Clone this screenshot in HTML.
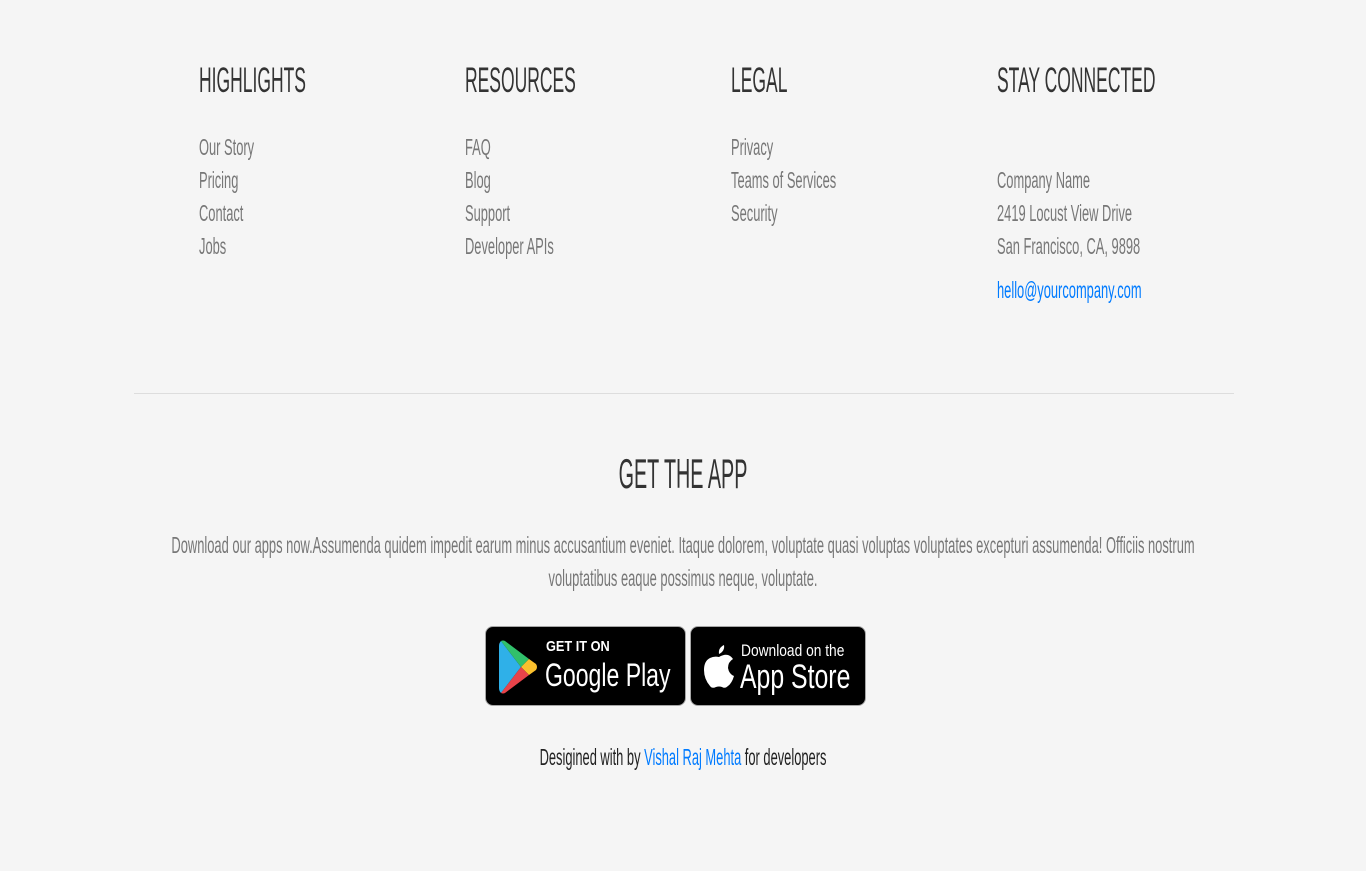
<!DOCTYPE html>
<html><head><meta charset="utf-8"><style>
body{margin:0;width:1366px;height:871px;background:#f5f5f5;position:relative;overflow:hidden;font-family:"Liberation Sans",sans-serif}
.t{position:absolute;white-space:nowrap;line-height:1;transform:scaleX(.56);transform-origin:0 0;font-size:23px;color:#777}
.h{font-size:35px;color:#333;transform:scaleX(.5)}
.c{left:-500px;width:2366px;text-align:center;transform-origin:50% 0}
a{color:#007bff;text-decoration:none}
.badge{position:absolute;background:#000;border:1.5px solid #a6a6a6;border-radius:8px;box-sizing:border-box;color:#fff;overflow:hidden}
.bt{position:absolute;white-space:nowrap;line-height:1;transform-origin:0 0}
</style></head><body>
<div class="t h" style="left:199px;top:63px">HIGHLIGHTS</div>
<div class="t h" style="left:465px;top:63px">RESOURCES</div>
<div class="t h" style="left:731px;top:63px">LEGAL</div>
<div class="t h" style="left:997px;top:63px">STAY CONNECTED</div>

<div class="t" style="left:199px;top:136px">Our Story</div>
<div class="t" style="left:199px;top:169px">Pricing</div>
<div class="t" style="left:199px;top:202px">Contact</div>
<div class="t" style="left:199px;top:235px">Jobs</div>

<div class="t" style="left:465px;top:136px">FAQ</div>
<div class="t" style="left:465px;top:169px">Blog</div>
<div class="t" style="left:465px;top:202px">Support</div>
<div class="t" style="left:465px;top:235px">Developer APIs</div>

<div class="t" style="left:731px;top:136px">Privacy</div>
<div class="t" style="left:731px;top:169px">Teams of Services</div>
<div class="t" style="left:731px;top:202px">Security</div>

<div class="t" style="left:997px;top:169px">Company Name</div>
<div class="t" style="left:997px;top:202px">2419 Locust View Drive</div>
<div class="t" style="left:997px;top:235px">San Francisco, CA, 9898</div>
<div class="t" style="left:997px;top:279px;color:#007bff">hello@yourcompany.com</div>

<div style="position:absolute;left:134px;top:393px;width:1100px;height:1px;background:#ddd"></div>

<div class="t h c" style="top:453px;font-size:42px;transform:scaleX(.47)">GET THE APP</div>
<div class="t c" style="top:534px;transform:scaleX(.561)">Download our apps now.Assumenda quidem impedit earum minus accusantium eveniet. Itaque dolorem, voluptate quasi voluptas voluptates excepturi assumenda! Officiis nostrum</div>
<div class="t c" style="top:567px;transform:scaleX(.561)">voluptatibus eaque possimus neque, voluptate.</div>

<div class="badge" style="left:485px;top:626px;width:201px;height:80px">
<svg style="position:absolute;left:13px;top:12px" width="38" height="56" viewBox="0 0 38 56">
<path d="M2 2 L22 28 L2 54 Q0 52 0 49 L0 7 Q0 4 2 2Z" fill="#2fb0e8"/>
<path d="M2 2 L22 28 L30 20 L6 2 Q4 1 2 2Z" fill="#31c06b"/>
<path d="M22 28 L30 20 L37 25 Q39 28 37 31 L30 36Z" fill="#fbc02d"/>
<path d="M2 54 L22 28 L30 36 L6 54 Q4 55 2 54Z" fill="#e8434a"/>
</svg>
<div class="bt" style="left:60px;top:12px;font-size:15px;font-weight:bold;transform:scaleX(.85)">GET IT ON</div>
<div class="bt" style="left:59px;top:32px;font-size:32px;transform:scaleX(.72)">Google Play</div>
</div>
<div class="badge" style="left:690px;top:626px;width:176px;height:80px">
<svg style="position:absolute;left:13px;top:16px" width="30" height="46" viewBox="0 0 30 46">
<path d="M20 2 Q21 8 15 11 Q14 5 20 2Z" fill="#fff"/>
<path d="M15 14 Q20 11 24 12 Q27 13 29 16 Q24 19 24 25 Q25 31 30 33 Q28 40 24 43 Q21 46 18 44 Q15 43 12 44 Q8 46 6 43 Q0 36 0 27 Q0 18 6 15 Q10 13 15 14Z" fill="#fff"/>
</svg>
<div class="bt" style="left:50px;top:15px;font-size:17px;transform:scaleX(.81)">Download on the</div>
<div class="bt" style="left:49px;top:33px;font-size:34px;transform:scaleX(.73)">App Store</div>
</div>

<div class="t c" style="top:746px;color:#222">Desigined with by <a>Vishal Raj Mehta</a> for developers</div>
</body></html>
